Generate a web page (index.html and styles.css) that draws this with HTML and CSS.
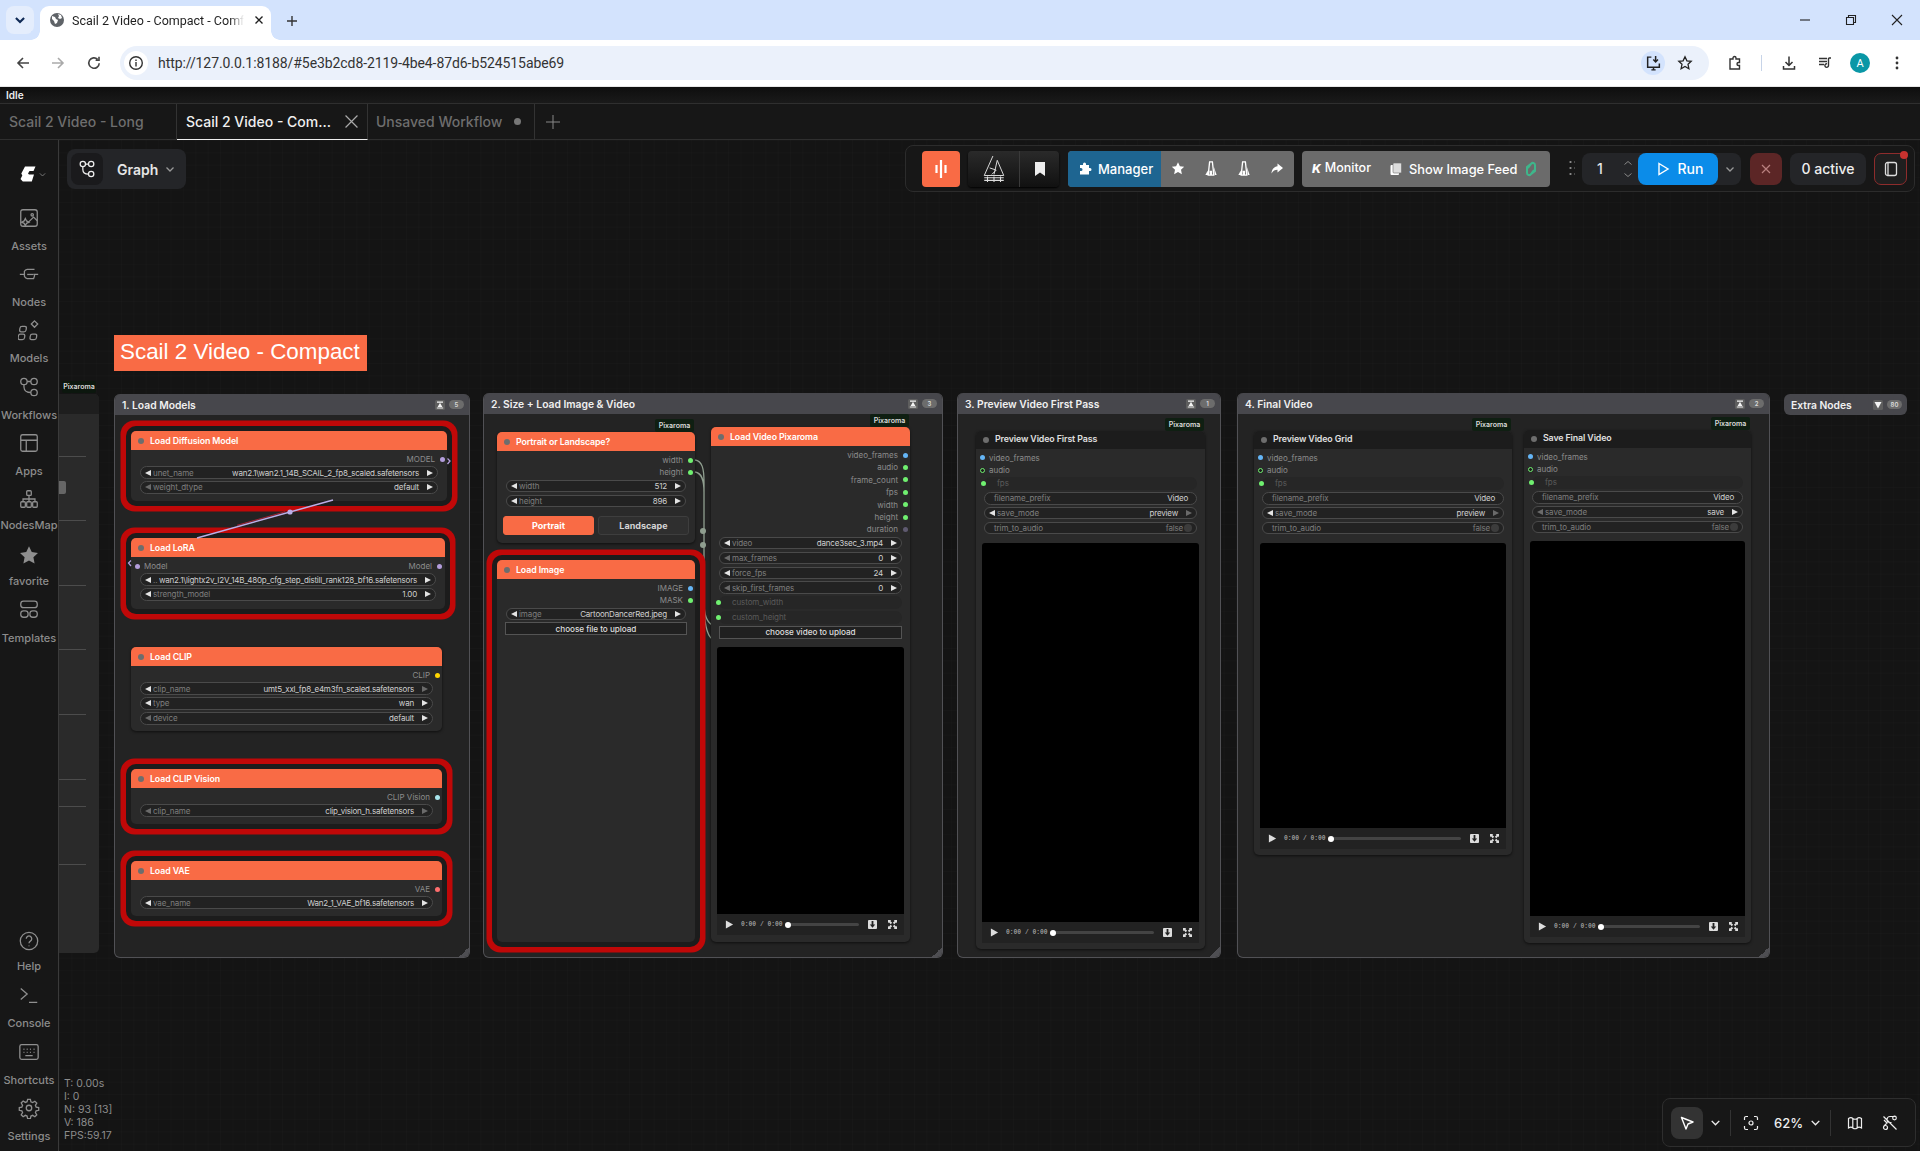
FILE: index.html
```html
<!DOCTYPE html>
<html lang="en">
<head>
<meta charset="utf-8">
<title>Scail 2 Video - Compact - ComfyUI</title>
<link rel="stylesheet" href="styles.css">
</head>
<body>
<svg class="defs" aria-hidden="true">
  <symbol id="pin" viewBox="0 0 10 10"><rect width="10" height="10" rx="1.500" fill="#5e5e5e"/><path d="M2 1.600h6v1.200H2zM5 2.800 7.400 7H2.600zM1.800 7.400h6.400v1.200H1.800z" fill="#f4f4f4"/></symbol>
  <symbol id="pindown" viewBox="0 0 10 10"><rect width="10" height="10" rx="1.500" fill="#5e5e5e"/><path d="M1.500 2h7L5 8.500z" fill="#f4f4f4"/></symbol>
  <symbol id="play" viewBox="0 0 10 10"><path d="M1 0.500 9 5 1 9.500z" fill="#ddd"/></symbol>
  <symbol id="down" viewBox="0 0 10 10"><rect width="10" height="10" rx="1" fill="#ddd"/><path d="M4 1h2v4h2L5 8.600 2 5h2z" fill="#222"/></symbol>
  <symbol id="full" viewBox="0 0 10 10"><path d="M0 0h3.600L2.600 1 4.600 3 3 4.600 1 2.600 0 3.600zM10 0v3.600L9 2.600 7 4.600 5.400 3 7.400 1 6.400 0zM0 10V6.400l1 1 2-2L4.600 7 2.600 9l1 1zM10 10H6.400l1-1-2-2L7 5.400l2 2 1-1z" fill="#ddd"/></symbol>
  <symbol id="flow" viewBox="0 0 24 24"><g fill="none" stroke="currentColor" stroke-width="1.500"><circle cx="7" cy="6" r="3.200"/><circle cx="17" cy="6" r="3.200"/><circle cx="17" cy="18" r="3.200"/><path d="M7 9.200v3.300c0 3.500 3 5.500 6.800 5.500M10.200 6h3.600"/></g></symbol>
  <symbol id="chev" viewBox="0 0 12 12"><path d="M2.500 4.500 6 8l3.500-3.500" fill="none" stroke="currentColor" stroke-width="1.300"/></symbol>
  <symbol id="acad" viewBox="0 0 14 16"><path d="M5.500 1h3l1.500 14H7.500V11H6.200v4H4z" fill="none" stroke="#fff" stroke-width="1.400"/><path d="M10 6l3 9h-2z" fill="#fff"/><path d="M1 15l2.500-5 .5 5z" fill="#fff"/></symbol>
</svg>

<header class="chrome">
  <div class="tabstrip">
    <button class="tablist"><svg class="i14" viewBox="0 0 12 12"><path d="M2.500 4.200 6 7.700l3.500-3.500" fill="none" stroke="#0f2a55" stroke-width="1.800"/></svg></button>
    <div class="btab">
      <svg class="fav" viewBox="0 0 16 16"><circle cx="8" cy="8" r="7" fill="#5f6368"/><path d="M3 4l3 1 1 2 2 1-1 3-2 1-1-3-2-2zM9 2l3 1 1 3-2 1-2-1 1-2z" fill="#fff"/></svg>
      <span class="btitle">Scail 2 Video - Compact - Comf</span>
      <svg class="bclose" viewBox="0 0 10 10"><path d="M1.500 1.500l7 7M8.500 1.500l-7 7" stroke="#1f1f1f" stroke-width="1.400"/></svg>
    </div>
    <svg class="newtab" viewBox="0 0 12 12"><path d="M6 1v10M1 6h10" stroke="#333" stroke-width="1.400"/></svg>
    <div class="winctl">
      <svg viewBox="0 0 12 12"><path d="M1 6h10" stroke="#222" stroke-width="1.100"/></svg>
      <svg viewBox="0 0 12 12"><path d="M3.500 3V1.500h7v7H9M1.500 3.500h7v7h-7z" fill="none" stroke="#222" stroke-width="1.100"/></svg>
      <svg viewBox="0 0 12 12"><path d="M1 1l10 10M11 1 1 11" stroke="#222" stroke-width="1.100"/></svg>
    </div>
  </div>
  <div class="toolbar">
    <svg class="tb" viewBox="0 0 16 16"><path d="M14 8H3M8 3 3 8l5 5" fill="none" stroke="#444" stroke-width="1.600"/></svg>
    <svg class="tb" viewBox="0 0 16 16"><path d="M2 8h11M8 3l5 5-5 5" fill="none" stroke="#aaa" stroke-width="1.600"/></svg>
    <svg class="tb rl" viewBox="0 0 16 16"><path d="M13.200 8.200a5.200 5.200 0 1 1-1.600-3.900M13 1.800v3.400H9.600" fill="none" stroke="#444" stroke-width="1.600"/></svg>
    <div class="omni">
      <span class="site"><svg viewBox="0 0 16 16"><circle cx="8" cy="8" r="6.300" fill="none" stroke="#333" stroke-width="1.400"/><path d="M7.300 7h1.400v4.500H7.300zM7.300 4.500h1.400v1.400H7.300z" fill="#333"/></svg></span>
      <span class="url">http://127.0.0.1:8188/#5e3b2cd8-2119-4be4-87d6-b524515abe69</span>
      <span class="install"><svg viewBox="0 0 16 16"><path d="M6 2H2.500v9.500h11V8M6 14h4M8 11.500V14" fill="none" stroke="#222" stroke-width="1.400"/><path d="M10 1v5M7.800 4.200 10 6.500l2.200-2.300" fill="none" stroke="#222" stroke-width="1.400"/></svg></span>
      <svg class="ostar" viewBox="0 0 16 16"><path d="m8 1.800 1.900 4 4.300.5-3.200 3 .9 4.400L8 11.500l-3.900 2.200.9-4.400-3.200-3 4.300-.5z" fill="none" stroke="#222" stroke-width="1.300"/></svg>
    </div>
    <svg class="tb ext" viewBox="0 0 16 16"><path d="M3 4h3V3a1.500 1.500 0 0 1 3 0v1h3.500v3.500h-1a1.500 1.500 0 0 0 0 3h1V14H3z" fill="none" stroke="#333" stroke-width="1.400"/></svg>
    <span class="tbsep"></span>
    <svg class="tb dl" viewBox="0 0 16 16"><path d="M8 1.500V10M4.500 7 8 10.500 11.500 7M2.500 11v3h11v-3" fill="none" stroke="#333" stroke-width="1.500"/></svg>
    <svg class="tb media" viewBox="0 0 16 16"><path d="M2 3.500h8M2 6.500h8M2 9.500h5" stroke="#333" stroke-width="1.400"/><path d="M11.500 3v7.500a1.800 1.800 0 1 1-1.500-1.700M11.500 3H14" fill="none" stroke="#333" stroke-width="1.400"/></svg>
    <span class="avatar">A</span>
    <svg class="tb kebab" viewBox="0 0 16 16"><circle cx="8" cy="3" r="1.400" fill="#333"/><circle cx="8" cy="8" r="1.400" fill="#333"/><circle cx="8" cy="13" r="1.400" fill="#333"/></svg>
  </div>
</header>

<div class="idle">Idle</div>
<nav class="wftabs">
  <div class="wftab t1"><span>Scail 2 Video - Long</span></div>
  <div class="wftab t2 on"><span>Scail 2 Video - Com...</span><svg class="wfx" viewBox="0 0 12 12"><path d="M.5 .5l11 11M11.500 .5l-11 11" stroke="#aaa" stroke-width="1.100"/></svg></div>
  <div class="wftab t3"><span>Unsaved Workflow</span><b class="dirty"></b></div>
  <svg class="wfplus" viewBox="0 0 14 14"><path d="M7 0v14M0 7h14" stroke="#888" stroke-width="1"/></svg>
</nav>

<div class="app">
  <aside class="side">
    <div class="logo">
      <svg class="clogo" viewBox="0 0 16 16"><path d="M5 .5h10.500l-2 4.500H9.500L8 7.500l1 1h5l-2.200 7H2.800L.5 13l1.800-3.500-1-2z" fill="#fff"/></svg>
      <svg class="clogochev" viewBox="0 0 12 12"><use href="#chev"/></svg>
    </div>
    <div class="sitem"><svg viewBox="0 0 24 24"><rect x="3" y="3" width="18" height="18" rx="2.500"/><circle cx="15.500" cy="8.500" r="1.300"/><path d="M21 15l-4-4-5 5M8 12.500l1.300 2.700 2.700 1.300-2.700 1.300L8 20.500l-1.300-2.700L4 16.500l2.700-1.300z"/></svg><span>Assets</span></div>
    <div class="sitem"><svg viewBox="0 0 24 24"><path d="M2 12.500h5M17 12.500h5M18 7H10a4 4 0 0 0-3 2v5.500A4 4 0 0 0 10 17h7l1-3v-1"/><path d="M17 12.500H10"/></svg><span>Nodes</span></div>
    <div class="sitem"><svg viewBox="0 0 24 24"><rect x="3.500" y="8" width="7" height="6" rx="2" transform="skewX(-8)"/><rect x="4" y="16.500" width="7" height="6" rx="2" transform="skewX(-8) translate(-1 0)"/><rect x="15" y="16.500" width="7" height="6" rx="2" transform="skewX(-8) translate(1 0)"/><path d="m18 2 3.500 3.500L18 9l-3.500-3.500z"/></svg><span>Models</span></div>
    <div class="sitem"><svg viewBox="0 0 24 24"><circle cx="6.500" cy="6" r="3.500"/><circle cx="17.500" cy="6" r="3.500"/><circle cx="17.500" cy="18" r="3.500"/><path d="M6.500 9.500V12c0 4 3.500 6 7.500 6M10 6h4"/></svg><span>Workflows</span></div>
    <div class="sitem"><svg viewBox="0 0 24 24"><rect x="3" y="3" width="18" height="18" rx="2"/><path d="M3 9h18M9 9v12"/></svg><span>Apps</span></div>
    <div class="sitem sm"><svg viewBox="0 0 24 24"><rect x="9.500" y="3" width="5" height="5" rx="1"/><rect x="3" y="15" width="5" height="6" rx="1"/><rect x="9.500" y="15" width="5" height="6" rx="1"/><rect x="16" y="15" width="5" height="6" rx="1"/><path d="M12 8v7M5.500 15v-3h13v3"/></svg><span>NodesMap</span></div>
    <div class="sitem sm"><svg class="fill" viewBox="0 0 24 24"><path d="m12 2.500 3 6.300 6.800.9-5 4.700 1.300 6.800-6.100-3.300-6.100 3.300 1.300-6.800-5-4.700 6.800-.9z"/></svg><span>favorite</span></div>
    <div class="sitem tmpl"><svg viewBox="0 0 24 24"><rect x="3" y="3.500" width="18" height="7" rx="3"/><rect x="3" y="14" width="8" height="7" rx="3"/><rect x="13" y="14" width="8" height="7" rx="3"/></svg><span>Templates</span></div>
    <div class="sgrow"></div>
    <div class="sitem"><svg class="hlp" viewBox="0 0 24 24"><circle cx="12" cy="12" r="9.500"/><path d="M9 9.500a3 3 0 1 1 4.500 2.600c-1 .6-1.500 1.200-1.500 2.400M12 17v.6"/></svg><span>Help</span></div>
    <div class="sitem"><svg viewBox="0 0 24 24"><path d="m3 5 7 6-7 6M12 20h9"/></svg><span>Console</span></div>
    <div class="sitem"><svg viewBox="0 0 24 24"><rect x="2" y="4" width="20" height="16" rx="2"/><path d="M6 9h1M9.500 9h1M13 9h1M17 9h1M6 12.500h1M9.500 12.500h1M13 12.500h1M17 12.500h1M8 16h8"/></svg><span>Shortcuts</span></div>
    <div class="sitem"><svg viewBox="0 0 24 24"><circle cx="12" cy="12" r="3"/><path d="M10.500 2.500h3l.6 2.800 1.900.8 2.400-1.500 2.100 2.100-1.500 2.400.8 1.900 2.800.6v2.900l-2.800.6-.8 1.900 1.500 2.400-2.100 2.100-2.400-1.500-1.900.8-.6 2.800h-3l-.6-2.800-1.900-.8-2.400 1.500-2.100-2.100 1.500-2.400-.8-1.900-2.800-.6v-2.900l2.800-.6.8-1.900L3.500 6.500l2.100-2.100L8 5.900l1.900-.8z"/></svg><span>Settings</span></div>
  </aside>

  <main class="canvas">
    <section class="group g1"><div class="ghead"><span>1. Load Models</span><svg class="gpin"><use href="#pin"/></svg><em>5</em></div></section>
    <section class="group g2"><div class="ghead"><span>2. Size + Load Image &amp; Video</span><svg class="gpin"><use href="#pin"/></svg><em>3</em></div></section>
    <section class="group g3"><div class="ghead"><span>3. Preview Video First Pass</span><svg class="gpin"><use href="#pin"/></svg><em>1</em></div></section>
    <section class="group g4"><div class="ghead"><span>4. Final Video</span><svg class="gpin"><use href="#pin"/></svg><em>2</em></div></section>
    <section class="group gx"><div class="ghead"><span>Extra Nodes</span><svg class="gpin"><use href="#pindown"/></svg><em>80</em></div></section>

    <div class="title-note">Scail 2 Video - Compact</div>

    <svg class="wires" viewBox="0 0 1861 1011">
      <path d="M636 320c7 1 9 8 9 22v120c0 14 3 20 8 23M636 332c7 1 9 8 9 20v110c0 16 2 32 8 37" fill="none" stroke="#8f9e8f" stroke-width="1.300"/>
      <circle cx="644" cy="391" r="3" fill="#8f9e8f"/>
      <circle cx="644" cy="405" r="3" fill="#8f9e8f"/>
    </svg>

    <aside class="lpanel">
      <div class="badge bl">Pixaroma</div>
      <div class="lhead"></div>
      <i class="lline l1"></i><i class="lline l2"></i><i class="lline l3"></i><i class="lline l4"></i><i class="lline l5"></i><i class="lline l6"></i><i class="lline l7"></i><i class="lline l8"></i>
      <i class="lgrip"></i>
    </aside>

    <article class="node hl n-diff">
      <div class="ntitle"><i></i>Load Diffusion Model</div>
      <div class="slot r">MODEL<b class="c-pur"></b></div>
      <div class="ws">
        <div class="w"><i class="al"></i><span class="wl">unet_name</span><span class="wv">wan2.1\wan2.1_14B_SCAIL_2_fp8_scaled.safetensors</span><i class="ar"></i></div>
        <div class="w"><i class="al dim"></i><span class="wl">weight_dtype</span><span class="wv">default</span><i class="ar"></i></div>
      </div>
    </article>

    <article class="node hl n-lora">
      <div class="ntitle"><i></i>Load LoRA</div>
      <div class="slot both"><b class="c-pur"></b><span>Model</span><span class="sp"></span><span>Model</span><b class="c-pur"></b></div>
      <div class="ws">
        <div class="w"><i class="al"></i><span class="wl">..</span><span class="wv">wan2.1\lightx2v_I2V_14B_480p_cfg_step_distill_rank128_bf16.safetensors</span><i class="ar"></i></div>
        <div class="w"><i class="al"></i><span class="wl">strength_model</span><span class="wv">1.00</span><i class="ar"></i></div>
      </div>
    </article>

    <article class="node n-clip">
      <div class="ntitle"><i></i>Load CLIP</div>
      <div class="slot r">CLIP<b class="c-yel"></b></div>
      <div class="ws">
        <div class="w"><i class="al"></i><span class="wl">clip_name</span><span class="wv">umt5_xxl_fp8_e4m3fn_scaled.safetensors</span><i class="ar dim"></i></div>
        <div class="w"><i class="al"></i><span class="wl">type</span><span class="wv">wan</span><i class="ar"></i></div>
        <div class="w"><i class="al dim"></i><span class="wl">device</span><span class="wv">default</span><i class="ar"></i></div>
      </div>
    </article>

    <article class="node hl n-clipv">
      <div class="ntitle"><i></i>Load CLIP Vision</div>
      <div class="slot r">CLIP Vision<b class="c-cya"></b></div>
      <div class="ws">
        <div class="w"><i class="al dim"></i><span class="wl">clip_name</span><span class="wv">clip_vision_h.safetensors</span><i class="ar dim"></i></div>
      </div>
    </article>

    <article class="node hl n-vae">
      <div class="ntitle"><i></i>Load VAE</div>
      <div class="slot r">VAE<b class="c-red"></b></div>
      <div class="ws">
        <div class="w"><i class="al"></i><span class="wl">vae_name</span><span class="wv">Wan2_1_VAE_bf16.safetensors</span><i class="ar"></i></div>
      </div>
    </article>

    <article class="node n-port">
      <div class="badge">Pixaroma</div>
      <div class="ntitle"><i></i>Portrait or Landscape?</div>
      <div class="slot r">width<b class="c-gre"></b></div>
      <div class="slot r">height<b class="c-gre"></b></div>
      <div class="ws">
        <div class="w"><i class="al"></i><span class="wl">width</span><span class="wv">512</span><i class="ar"></i></div>
        <div class="w"><i class="al"></i><span class="wl">height</span><span class="wv">896</span><i class="ar"></i></div>
      </div>
      <div class="btns"><button class="pbtn on">Portrait</button><button class="pbtn">Landscape</button></div>
    </article>

    <article class="node hl n-img">
      <div class="ntitle"><i></i>Load Image</div>
      <div class="slot r">IMAGE<b class="c-blu"></b></div>
      <div class="slot r">MASK<b class="c-gre"></b></div>
      <div class="ws">
        <div class="w"><i class="al"></i><span class="wl">image</span><span class="wv">CartoonDancerRed.jpeg</span><i class="ar"></i></div>
      </div>
      <button class="upl">choose file to upload</button>
    </article>

    <article class="node col n-vid">
      <div class="badge">Pixaroma</div>
      <div class="ntitle"><i></i>Load Video Pixaroma</div>
      <div class="slot r">video_frames<b class="c-blu"></b></div>
      <div class="slot r">audio<b class="c-gre"></b></div>
      <div class="slot r">frame_count<b class="c-gre"></b></div>
      <div class="slot r">fps<b class="c-gre"></b></div>
      <div class="slot r">width<b class="c-gre"></b></div>
      <div class="slot r">height<b class="c-gre"></b></div>
      <div class="slot r">duration<b class="c-gry"></b></div>
      <div class="ws">
        <div class="w"><i class="al"></i><span class="wl">video</span><span class="wv">dance3sec_3.mp4</span><i class="ar"></i></div>
        <div class="w"><i class="al dim"></i><span class="wl">max_frames</span><span class="wv">0</span><i class="ar"></i></div>
        <div class="w"><i class="al"></i><span class="wl">force_fps</span><span class="wv">24</span><i class="ar"></i></div>
        <div class="w"><i class="al dim"></i><span class="wl">skip_first_frames</span><span class="wv">0</span><i class="ar"></i></div>
        <div class="w inp"><b class="c-gre"></b><span class="wl">custom_width</span></div>
        <div class="w inp"><b class="c-gre"></b><span class="wl">custom_height</span></div>
      </div>
      <button class="upl">choose video to upload</button>
      <div class="vid"></div>
      <div class="ctl"><svg class="cplay"><use href="#play"/></svg><span class="time">0:00 / 0:00</span><span class="track"></span><svg class="cic"><use href="#down"/></svg><svg class="cic"><use href="#full"/></svg></div>
    </article>

    <article class="node col dark n-prev">
      <div class="badge">Pixaroma</div>
      <div class="ntitle"><i></i>Preview Video First Pass</div>
      <div class="slot l"><b class="c-blu"></b>video_frames</div>
      <div class="slot l"><b class="ring"></b>audio</div>
      <div class="ws tight">
        <div class="w inp"><b class="c-gre"></b><span class="wl">fps</span></div>
        <div class="w txt"><span class="wl">filename_prefix</span><span class="wv">Video</span></div>
        <div class="w"><i class="al"></i><span class="wl">save_mode</span><span class="wv">preview</span><i class="ar dim"></i></div>
        <div class="w txt"><span class="wl">trim_to_audio</span><span class="wv off">false</span><i class="tog"></i></div>
      </div>
      <div class="vid"></div>
      <div class="ctl"><svg class="cplay"><use href="#play"/></svg><span class="time">0:00 / 0:00</span><span class="track"></span><svg class="cic"><use href="#down"/></svg><svg class="cic"><use href="#full"/></svg></div>
    </article>

    <article class="node col dark n-grid">
      <div class="badge">Pixaroma</div>
      <div class="ntitle"><i></i>Preview Video Grid</div>
      <div class="slot l"><b class="c-blu"></b>video_frames</div>
      <div class="slot l"><b class="ring"></b>audio</div>
      <div class="ws tight">
        <div class="w inp"><b class="c-gre"></b><span class="wl">fps</span></div>
        <div class="w txt"><span class="wl">filename_prefix</span><span class="wv">Video</span></div>
        <div class="w"><i class="al"></i><span class="wl">save_mode</span><span class="wv">preview</span><i class="ar dim"></i></div>
        <div class="w txt"><span class="wl">trim_to_audio</span><span class="wv off">false</span><i class="tog"></i></div>
      </div>
      <div class="vid"></div>
      <div class="ctl"><svg class="cplay"><use href="#play"/></svg><span class="time">0:00 / 0:00</span><span class="track"></span><svg class="cic"><use href="#down"/></svg><svg class="cic"><use href="#full"/></svg></div>
    </article>

    <article class="node col dark n-save">
      <div class="badge">Pixaroma</div>
      <div class="ntitle"><i></i>Save Final Video</div>
      <div class="slot l"><b class="c-blu"></b>video_frames</div>
      <div class="slot l"><b class="ring"></b>audio</div>
      <div class="ws tight">
        <div class="w inp"><b class="c-gre"></b><span class="wl">fps</span></div>
        <div class="w txt"><span class="wl">filename_prefix</span><span class="wv">Video</span></div>
        <div class="w"><i class="al dim"></i><span class="wl">save_mode</span><span class="wv">save</span><i class="ar"></i></div>
        <div class="w txt"><span class="wl">trim_to_audio</span><span class="wv off">false</span><i class="tog"></i></div>
      </div>
      <div class="vid"></div>
      <div class="ctl"><svg class="cplay"><use href="#play"/></svg><span class="time">0:00 / 0:00</span><span class="track"></span><svg class="cic"><use href="#down"/></svg><svg class="cic"><use href="#full"/></svg></div>
    </article>

    <svg class="wires" viewBox="0 0 1861 1011">
      <path d="M178 386.500 226 373" stroke="#e0203c" stroke-width=".7" transform="translate(0 -1.200)"/>
      <path d="M138 398 274 360" stroke="#bcaee8" stroke-width="1.500"/>
      <circle cx="231" cy="372" r="2.600" fill="#bcaee8"/>
      <path d="M388.500 318.500l2.500 2.500-2.500 3M72 420.500l-2.500 2.500 2.500 3" fill="none" stroke="#b39ddb" stroke-width="1.300"/>
    </svg>

    <div class="graphpill">
      <span class="gbox"><svg viewBox="0 0 24 24"><use href="#flow"/></svg></span>
      <span class="glabel">Graph</span>
      <svg class="gchev"><use href="#chev"/></svg>
    </div>

    <div class="actionbar">
      <button class="ab-orange"><svg viewBox="0 0 16 20"><path d="M8 1v18M3.500 6v8M12.500 6v8" stroke="#fff" stroke-width="2.200"/></svg></button>
      <div class="ab-dual">
        <span class="ab-logo"><svg viewBox="0 0 24 26"><path d="M11 1 3 19h18L15 5l-3 13M8 12l6 2-4 4" fill="none" stroke="#ddd" stroke-width=".9"/><path d="M3 21h18M3 23.500h18" stroke="#ddd" stroke-width="1"/><path d="M6 20v5M12 20v5M18 20v5" stroke="#ddd"/></svg></span>
        <span class="ab-book"><svg viewBox="0 0 10 14"><path d="M0 0h10v14L5 10.500 0 14z" fill="#eee"/></svg></span>
      </div>
      <div class="ab-grey mgr">
        <span class="ab-mgr"><svg viewBox="0 0 14 14"><path d="M2 3h3V2a1.500 1.500 0 0 1 3 0v1h3v3h1a1.500 1.500 0 0 1 0 3h-1v3.500H2V9h1a1.500 1.500 0 0 0 0-3H2z" fill="#fff"/></svg>Manager</span>
        <span class="ab-ics">
          <svg viewBox="0 0 14 14"><path d="m7 .8 1.900 4 4.300.5-3.200 3 .9 4.400L7 10.500l-3.900 2.200.9-4.400L.8 5.300l4.300-.5z" fill="#fff"/></svg>
          <svg viewBox="0 0 14 16"><use href="#acad"/></svg>
          <svg viewBox="0 0 14 16"><use href="#acad"/></svg>
          <svg viewBox="0 0 14 14"><path d="M7.500 2 13 6.500 7.500 11V8.200C5 8.200 3 9 1.500 12c.2-4 2.500-7 6-7.300z" fill="#fff"/></svg>
        </span>
      </div>
      <div class="ab-grey mon">
        <span class="ab-k">K</span><span class="ab-mon">Monitor</span>
        <svg class="ab-feed" viewBox="0 0 14 14"><rect x="1.500" y="3" width="8.500" height="10" rx="1" fill="#fff"/><rect x="4" y="1" width="8.500" height="10" rx="1" fill="#ddd" stroke="#6b6b6b" stroke-width=".6"/></svg>
        <span class="ab-show">Show Image Feed</span>
        <svg class="ab-link" viewBox="0 0 14 16"><path d="M8 2 3 6v6c0 2 3 3 4 1l3-4M6 14l5-4V4C11 2 8 1 7 3L4 7" fill="none" stroke="#3fb68b" stroke-width="2"/></svg>
      </div>
      <span class="ab-drag"></span>
      <div class="queue">
        <span class="qn">1</span>
        <span class="qst"><svg viewBox="0 0 10 6"><path d="M1.500 4.500 5 1.500l3.500 3" fill="none" stroke="#888"/></svg><svg viewBox="0 0 10 6"><path d="M1.500 1.500 5 4.500l3.500-3" fill="none" stroke="#888"/></svg></span>
        <button class="run"><svg viewBox="0 0 14 14"><path d="M3 1.500 12 7l-9 5.500z" fill="none" stroke="#fff" stroke-width="1.400"/></svg>Run</button>
        <svg class="qchev"><use href="#chev"/></svg>
      </div>
      <button class="stop"><svg viewBox="0 0 10 10"><path d="M1 1l8 8M9 1 1 9" stroke="#b9807f" stroke-width="1.200"/></svg></button>
      <span class="active0">0 active</span>
      <button class="paneltog"><svg viewBox="0 0 16 16"><rect x="2.500" y="1.500" width="11" height="13" rx="2" fill="none" stroke="#ddd" stroke-width="1.300"/><path d="M5 1.500v13" stroke="#ddd" stroke-width="1.300"/></svg><b></b></button>
    </div>

    <pre class="stats">T: 0.00s
I: 0
N: 93 [13]
V: 186
FPS:59.17</pre>

    <div class="zoombar">
      <span class="zselect"><svg viewBox="0 0 16 16"><path d="M2.500 2.500 14 7l-5 2-2 5z" fill="none" stroke="#fff" stroke-width="1.400" stroke-linejoin="round"/></svg></span>
      <svg class="zchev"><use href="#chev"/></svg>
      <span class="zsep"></span>
      <svg class="zic" viewBox="0 0 16 16"><path d="M1.500 5V3a1.500 1.500 0 0 1 1.500-1.500h2M11 1.500h2A1.500 1.500 0 0 1 14.500 3v2M14.500 11v2a1.500 1.500 0 0 1-1.500 1.500h-2M5 14.500H3A1.500 1.500 0 0 1 1.500 13v-2" fill="none" stroke="#eee" stroke-width="1.200"/><circle cx="8" cy="8" r="2" fill="none" stroke="#eee" stroke-width="1.200"/></svg>
      <span class="zpct">62%</span>
      <svg class="zchev"><use href="#chev"/></svg>
      <span class="zsep"></span>
      <svg class="zic" viewBox="0 0 16 16"><path d="M1.500 3.500c2-1.200 3-1.200 4.300 0 1.500 1 3 1 4.400 0 1.300-1.200 2.300-1.200 4.300 0v9.500c-2-1.200-3-1.200-4.300 0-1.400 1-2.900 1-4.400 0-1.300-1.200-2.300-1.200-4.300 0zM5.800 3.500V13M10.200 3.500V13" fill="none" stroke="#eee" stroke-width="1.200"/></svg>
      <svg class="zic" viewBox="0 0 16 16"><path d="M1.500 1.500l13 13M13 1.500H8a3 3 0 0 0 0 6h1.500M2 5l3 3-3 3" fill="none" stroke="#eee" stroke-width="1.200"/><circle cx="3.500" cy="12.500" r="2" fill="none" stroke="#eee" stroke-width="1.200"/><circle cx="12.500" cy="3" r="1.800" fill="none" stroke="#eee" stroke-width="1.200"/></svg>
    </div>
  </main>
</div>
</body>
</html>
```
FILE: styles.css
```css
* { box-sizing: border-box; }
html, body { margin: 0; padding: 0; width: 1920px; height: 1151px; overflow: hidden; background: #141414; }
body { display: flex; flex-direction: column; font-family: "Inter", "Liberation Sans", sans-serif; }
button { font-family: inherit; border: 0; padding: 0; margin: 0; }
.defs { position: absolute; width: 0; height: 0; }

/* browser chrome */
.chrome { flex: none; height: 87px; background: #fff; border-bottom: 1px solid #e6e6e6; }
.tabstrip { height: 40px; background: #d3e3fd; display: flex; align-items: flex-end; position: relative; }
.tablist { width: 28px; height: 28px; margin: 0 6px 6px 6px; background: #e4edfc; border-radius: 8px; display: flex; align-items: center; justify-content: center; }
.i14 { width: 14px; height: 14px; }
.btab { width: 231px; height: 34px; background: #fff; border-radius: 9px 9px 0 0; display: flex; align-items: center; padding: 0 10px 6px 9px; font: 12.500px "Roboto", sans-serif; color: #1f1f1f; position: relative; }
.btab::before, .btab::after { content: ""; position: absolute; bottom: 0; width: 9px; height: 9px; background: radial-gradient(circle at var(--c) 0, #d3e3fd 8.500px, #fff 9px); }
.btab::before { left: -9px; --c: 0; }
.btab::after { right: -9px; --c: 100%; }
.fav { width: 16px; height: 16px; flex: none; margin: 0 7px 0 0; }
.btitle { flex: 1; white-space: nowrap; -webkit-mask-image: linear-gradient(90deg, #000 92%, transparent); mask-image: linear-gradient(90deg, #000 92%, transparent); }
.bclose { width: 10px; height: 10px; flex: none; margin-left: 10px; }
.newtab { width: 12px; height: 12px; margin: 0 0 13px 15px; }
.winctl { margin-left: auto; display: flex; gap: 34px; padding: 0 17px 14px 0; }
.winctl svg { width: 12px; height: 12px; }
.toolbar { height: 46px; display: flex; align-items: center; padding-left: 15px; }
.tb { width: 16px; height: 16px; flex: none; }
.tb + .tb { margin-left: 19px; }
.tb.rl { margin-left: 20px; }
.omni { width: 1589px; height: 34px; margin-left: 18px; background: #ebf1fb; border-radius: 17px; display: flex; align-items: center; position: relative; padding-left: 4px; }
.site { width: 24px; height: 24px; border-radius: 12px; background: #fff; display: flex; align-items: center; justify-content: center; }
.site svg { width: 16px; height: 16px; }
.url { margin-left: 10px; font: 14px "Roboto", sans-serif; color: #333; letter-spacing: -.08px; }
.install { margin-left: auto; width: 24px; height: 24px; background: #d3e3fd; border-radius: 12px; display: flex; align-items: center; justify-content: center; }
.install svg { width: 17px; height: 17px; }
.ostar { width: 16px; height: 16px; margin: 0 16px 0 12px; }
.tb.ext { margin-left: 18px; }
.tbsep { width: 1px; height: 16px; background: #c7d4e8; margin-left: 18px; }
.tb.dl { margin-left: 19px; }
.tb.media { margin-left: 20px; }
.avatar { width: 20px; height: 20px; border-radius: 10px; background: #0a97a6; color: #fff; font: 11px "Roboto", sans-serif; display: flex; align-items: center; justify-content: center; margin-left: 17px; }
.tb.kebab { margin-left: 19px; }

/* app top */
.idle { flex: none; height: 16px; background: linear-gradient(#0e0e0e, #1a1a1a); color: #eee; font-size: 10px; font-weight: 600; line-height: 16px; padding-left: 6px; }
.wftabs { flex: none; height: 37px; background: #171717; border-top: 1px solid #2f2f2f; border-bottom: 1px solid #2f2f2f; display: flex; align-items: stretch; font-size: 14px; font-weight: 500; color: #6e6e6e; }
.wftab { display: flex; align-items: center; padding-left: 9px; border-right: 1px solid #333; height: 35px; white-space: nowrap; }
.t1 { width: 177px; }
.t2 { width: 191px; color: #f0f0f0; border-bottom: 1px solid #eee; height: 36px; }
.t3 { width: 167px; padding-left: 8px; }
.wfx { width: 13px; height: 13px; margin-left: 14px; }
.dirty { width: 7px; height: 7px; border-radius: 50%; background: #777; margin-left: 12px; }
.wfplus { width: 14px; height: 14px; align-self: center; margin-left: 11px; }

.app { flex: 1; min-height: 0; display: flex; }
.side { width: 59px; flex: none; background: #171717; border-right: 1px solid #3a3a3a; display: flex; flex-direction: column; padding-bottom: 1px; }
.logo { height: 64px; flex: none; display: flex; align-items: center; padding: 4px 0 0 20px; }
.clogo { width: 16px; height: 16px; flex: none; }
.clogochev { width: 9px; height: 9px; margin-left: 2px; color: #777; flex: none; }
.sitem { height: 56.200px; flex: none; display: flex; flex-direction: column; align-items: center; color: #8c8c8c; font-size: 11px; font-weight: 500; }
.sitem svg { width: 22px; height: 22px; margin: 3px 0 10px; fill: none; stroke: #8f8f8f; stroke-width: 1.400; flex: none; }
.sitem.sm svg { margin-bottom: 8px; }
.sitem.tmpl { height: 54px; }
.sitem.tmpl svg { margin-top: 1px; margin-bottom: 11px; }
.sitem svg.fill { fill: #8f8f8f; stroke: none; }
.sitem svg.hlp { margin-top: 5px; margin-bottom: 7px; }
.sgrow { flex: 1; }

/* canvas */
.canvas { flex: 1; position: relative; overflow: hidden;
  background-color: #141414;
  background-image: linear-gradient(rgba(255,255,255,.012) 1px, transparent 1px), linear-gradient(90deg, rgba(255,255,255,.012) 1px, transparent 1px);
  background-size: 12.400px 12.400px; }
.wires { position: absolute; left: 0; top: 0; width: 1861px; height: 1011px; pointer-events: none; }

.title-note { position: absolute; left: 55px; top: 195px; width: 253px; height: 36px; background: #f96b45; color: #fff; font: 22.400px/34px "Liberation Sans", sans-serif; padding-left: 6px; white-space: nowrap; }

.group { position: absolute; background: #232323; border: 1px solid #515155; border-top: 0; border-radius: 6px; overflow: hidden; }
.group::after { content: ""; position: absolute; right: 0; bottom: 0; width: 10px; height: 10px; background: linear-gradient(135deg, transparent 50%, #4e4e52 50%); }
.ghead { height: 21px; background: #47474c; display: flex; align-items: center; padding: 0 5px 0 7px; color: #f0f0f0; font-size: 10.300px; font-weight: 600; white-space: nowrap; }
.ghead span { flex: 1; }
.gpin { width: 10px; height: 10px; flex: none; }
.ghead em { margin-left: 4px; width: 15px; height: 9.500px; background: #6c6c6c; border-radius: 5px; font-size: 6px; font-style: normal; line-height: 9.500px; text-align: center; color: #ddd; }
.g1 { left: 55px; top: 254px; width: 356px; height: 564px; }
.g2 { left: 424px; top: 253px; width: 460px; height: 565px; }
.g3 { left: 898px; top: 253px; width: 264px; height: 565px; }
.g4 { left: 1178px; top: 253px; width: 533px; height: 565px; }
.gx { left: 1725px; top: 254px; width: 123px; height: 21px; border: 0; }
.gx::after { display: none; }

/* left cut-off node */
.lpanel { position: absolute; left: 0; top: 254px; width: 40px; height: 559px; background: #2a2a2a; border-radius: 0 5px 5px 0; }
.lhead { height: 20px; background: #1e1e1e; border-radius: 0 5px 0 0; }
.lline { position: absolute; left: 0; width: 27px; height: 1px; background: #4c4c4c; }
.l1 { top: 62px; } .l2 { top: 126px; } .l3 { top: 191px; } .l4 { top: 255px; } .l5 { top: 320px; } .l6 { top: 385px; } .l7 { top: 412px; } .l8 { top: 470px; }
.lgrip { position: absolute; left: 0; top: 87px; width: 7px; height: 13px; background: #666; border-radius: 0 2px 2px 0; }

/* nodes */
.node { position: absolute; background: #2a2a2a; border-radius: 5px; box-shadow: 0 1px 3px rgba(0,0,0,.6); font-size: 8px; color: #8c8c8c; display: flex; flex-direction: column; }
.node.hl { box-shadow: 0 0 0 5px #1c1c1c, 0 0 0 10.500px #c00808; }
.ntitle { height: 19px; flex: none; background: #f96b45; border-radius: 5px 5px 0 0; color: #fff; font-size: 8.800px; font-weight: 600; line-height: 19px; padding-left: 19px; position: relative; letter-spacing: -.1px; white-space: nowrap; margin-bottom: 3px; }
.ntitle i { position: absolute; left: 7px; top: 6.500px; width: 6px; height: 6px; border-radius: 50%; background: #6d6d6d; }
.dark .ntitle { height: 17.500px; line-height: 16.500px; background: #1c1c1c; color: #e0e0e0; }
.dark .ntitle i { top: 5.750px; }
.slot { height: 12.400px; flex: none; display: flex; align-items: center; white-space: nowrap; line-height: 12.400px; }
.slot b, .inp b { width: 5px; height: 5px; border-radius: 50%; flex: none; }
.slot.r { justify-content: flex-end; padding-right: 2.500px; }
.slot.r b { margin-left: 4.500px; }
.slot.l { padding-left: 4px; }
.slot.l b { margin-right: 4px; }
.slot.both { padding: 0 3px 0 4px; }
.slot.both b:first-child { margin-right: 4px; }
.slot.both b:last-child { margin-left: 5px; }
.sp { flex: 1; }
.c-pur { background: #b39ddb; } .c-yel { background: #ffd500; } .c-cya { background: #a8e6ee; } .c-red { background: #ff6e6e; }
.c-gre { background: #70f070; } .c-blu { background: #64b5f6; } .c-gry { background: #5f5a70; }
.ring { background: #1c1c1c; border: 1.400px solid #70f070; }

.ws { display: flex; flex-direction: column; gap: 2.500px; margin: 1px 9px 0; flex: none; }
.ws.tight { margin-top: 1px; }
.w { height: 12.400px; border: 1px solid #4a4a4a; border-radius: 7px; background: #222; display: flex; align-items: center; padding: 0 4px; color: #7e7e7e; white-space: nowrap; position: relative; }
.wl { flex: none; letter-spacing: -.1px; }
.wv { margin-left: auto; color: #d0d0d0; letter-spacing: -.2px; padding-right: 8px; }
.al, .ar { width: 0; height: 0; flex: none; border-top: 3px solid transparent; border-bottom: 3px solid transparent; }
.al { border-right: 6px solid #e4e4e4; margin-right: 2px; }
.ar { border-left: 6px solid #e4e4e4; }
.al.dim { border-right-color: #6a6a6a; }
.ar.dim { border-left-color: #6a6a6a; }
.w.txt { padding-left: 9px; padding-right: 4px; }
.w.txt .wv { padding-right: 4px; }
.wv.off { color: #7a7a7a; padding-right: 1px !important; }
.tog { width: 8px; height: 8px; border-radius: 50%; background: #3c3c3c; flex: none; }
.w.inp { background: #262626; border-color: transparent; padding-left: 12px; color: #5a5a5a; }
.w.inp b { position: absolute; left: -4px; top: 3px; }

.col .ws { margin-left: 8px; margin-right: 8px; }
.btns { display: flex; gap: 4px; margin: 9px 6px 0; flex: none; }
.pbtn { flex: 1; height: 18.500px; background: #2f2f2f; border: 1px solid #3e3e3e; border-radius: 3px; color: #d4d4d4; font-size: 9px; font-weight: 700; }
.pbtn.on { background: #f96b45; border-color: #f96b45; color: #fff; }
.upl { display: block; flex: none; height: 13px; margin: 2px 8px 0; background: #202020; border: 1px solid #545454; color: #ddd; font-size: 8.200px; line-height: 10px; font-weight: 500; letter-spacing: -.05px; }
.vid { flex: 1; margin: 8px 6px 0; background: #000; border-radius: 3px 3px 0 0; min-height: 0; }
.ctl { height: 21px; flex: none; margin: 0 6px 6px; background: #222; display: flex; align-items: center; padding: 0 7px 0 8px; color: #999; }
.cplay { width: 9px; height: 9px; flex: none; }
.time { font: 700 6.300px "Liberation Mono", monospace; margin-left: 7px; color: #9a9a9a; white-space: nowrap; }
.track { flex: 1; height: 3px; background: #444; border-radius: 2px; margin: 0 9px 0 2px; position: relative; }
.track::before { content: ""; position: absolute; left: 0; top: -1.500px; width: 6px; height: 6px; border-radius: 50%; background: #fff; }
.cic { width: 9px; height: 9px; flex: none; }
.cic + .cic { margin-left: 11px; }
.badge { position: absolute; right: 1px; top: -13px; height: 13px; width: 39px; background: #0f1f12; border-radius: 2px; color: #ddd; font-size: 7px; font-weight: 600; line-height: 13px; text-align: center; }
.badge.bl { left: 3px; right: auto; width: 34px; height: 12px; line-height: 12px; top: -13px; background: #0c170e; }

.n-diff { left: 72px; top: 291px; width: 316px; height: 70px; }
.n-lora { left: 72px; top: 398px; width: 314px; height: 71px; }
.n-clip { left: 72px; top: 507px; width: 311px; height: 84px; }
.n-clipv { left: 72px; top: 629px; width: 311px; height: 55px; }
.n-vae { left: 72px; top: 721px; width: 311px; height: 55px; }
.n-port { left: 438px; top: 292px; width: 198px; height: 111px; }
.n-img { left: 438px; top: 420px; width: 198px; height: 382px; }
.n-vid { left: 652px; top: 287px; width: 199px; height: 515px; }
.n-prev { left: 917px; top: 291px; width: 229px; height: 518px; }
.n-prev .vid { margin-top: 9px; }
.n-grid { left: 1195px; top: 291px; width: 258px; height: 424px; }
.n-grid .vid { margin-top: 9px; }
.n-save { left: 1465px; top: 290px; width: 227px; height: 513px; }
.n-vid .vid { margin-top: 8.500px; }
.n-vid .ctl { margin-bottom: 7px; }

/* graph pill */
.graphpill { position: absolute; left: 8px; top: 9px; width: 119px; height: 40px; background: #242528; border-radius: 8px; display: flex; align-items: center; padding-left: 4px; }
.gbox { width: 32px; height: 32px; background: #1a1a1c; border-radius: 8px; display: flex; align-items: center; justify-content: center; color: #eee; }
.gbox svg { width: 20px; height: 20px; }
.glabel { color: #e6e6e6; font-size: 14px; font-weight: 600; margin-left: 14px; }
.gchev { width: 12px; height: 12px; margin-left: 6px; color: #999; }

/* action bar */
.actionbar { position: absolute; right: 5px; top: 5px; width: 1010px; height: 47px; background: #171717; border: 1px solid #2c2c2c; border-radius: 8px; display: flex; align-items: center; padding-left: 16px; }
.ab-orange { width: 38px; height: 36px; background: #f96b45; border-radius: 4px; display: flex; align-items: center; justify-content: center; }
.ab-orange svg { width: 16px; height: 20px; }
.ab-dual { margin-left: 8px; width: 91px; height: 36px; background: linear-gradient(#2a2a2a, #111); border-radius: 4px; display: flex; box-shadow: 0 1px 2px #000; }
.ab-logo { width: 52px; border-right: 1px solid #3a3a3a; display: flex; align-items: center; justify-content: center; }
.ab-logo svg { width: 26px; height: 30px; }
.ab-book { flex: 1; display: flex; align-items: center; justify-content: center; }
.ab-book svg { width: 10px; height: 14px; }
.ab-grey { height: 36px; background: #6b6b6b; border-radius: 4px; display: flex; align-items: center; color: #fff; font-size: 13px; font-weight: 500; overflow: hidden; white-space: nowrap; }
.mgr { margin-left: 9px; width: 226px; }
.ab-mgr { width: 93px; height: 100%; background: #1e6591; display: flex; align-items: center; padding-left: 10px; }
.ab-mgr svg { width: 14px; height: 14px; margin-right: 6px; flex: none; }
.ab-ics { flex: 1; display: flex; align-items: center; padding-left: 10px; gap: 19px; }
.ab-ics svg { width: 14px; height: 15px; flex: none; }
.mon { margin-left: 8px; width: 248px; padding-left: 10px; }
.ab-k { font-style: italic; font-weight: 800; font-size: 12px; }
.ab-mon { margin-left: 4px; font-size: 12.500px; position: relative; top: -1px; }
.ab-feed { width: 14px; height: 14px; margin-left: 18px; flex: none; }
.ab-show { margin-left: 6px; font-size: 12.800px; position: relative; top: 1px; }
.ab-link { width: 14px; height: 16px; margin-left: 6px; flex: none; }
.ab-drag { width: 7px; height: 20px; margin-left: 18px; background-image: radial-gradient(circle, #888 1px, transparent 1.200px); background-size: 5px 6px; }
.queue { margin-left: 7px; width: 159px; height: 32px; background: #242528; border-radius: 8px; display: flex; align-items: center; color: #e6e6e6; font-size: 14px; }
.qn { width: 36px; text-align: center; font-weight: 500; }
.qst { width: 20px; display: flex; flex-direction: column; gap: 6px; align-items: center; }
.qst svg { width: 10px; height: 6px; }
.run { width: 80px; height: 32px; background: #0b8ce9; border-radius: 8px; color: #fff; font-size: 14px; font-weight: 500; display: flex; align-items: center; justify-content: center; gap: 8px; padding-left: 3px; }
.run svg { width: 14px; height: 14px; }
.qchev { width: 12px; height: 12px; margin-left: 6px; color: #999; }
.stop { margin-left: 9px; width: 32px; height: 32px; background: #5c2626; border-radius: 8px; display: flex; align-items: center; justify-content: center; }
.stop svg { width: 10px; height: 10px; }
.active0 { margin-left: 8px; width: 76px; height: 32px; background: #242528; border-radius: 8px; color: #eee; font-size: 14px; font-weight: 500; line-height: 32px; text-align: center; }
.paneltog { margin-left: 8px; width: 33px; height: 32px; background: #1f1f1f; border: 1px solid #8e2c2c; border-radius: 7px; display: flex; align-items: center; justify-content: center; position: relative; }
.paneltog svg { width: 16px; height: 16px; }
.paneltog b { position: absolute; right: -2px; top: -3px; width: 8px; height: 8px; border-radius: 50%; background: #c8322f; }

/* stats + zoom */
.stats { position: absolute; left: 5px; bottom: 9px; margin: 0; font: 10.500px/13px "Inter", sans-serif; color: #8c8c8c; }
.zoombar { position: absolute; right: 4px; bottom: 4px; width: 254px; height: 49px; background: #171717; border: 1px solid #2e2e2e; border-radius: 8px; display: flex; align-items: center; padding-left: 8px; color: #eee; }
.zselect { width: 32px; height: 32px; background: #333; border-radius: 8px; display: flex; align-items: center; justify-content: center; flex: none; }
.zselect svg { width: 16px; height: 16px; }
.zchev { width: 13px; height: 13px; flex: none; margin-left: 6px; }
.zsep { width: 1px; height: 26px; background: #333; margin-left: 8px; flex: none; }
.zic { width: 16px; height: 16px; flex: none; margin-left: 13px; }
.zsep + .zic { margin-left: 12px; }
.zpct { font-size: 13px; font-weight: 500; margin-left: 15px; flex: none; }
.zpct + .zchev + .zsep + .zic { margin-left: 16px; }
.zic:last-child { margin-left: 19px; }
```
